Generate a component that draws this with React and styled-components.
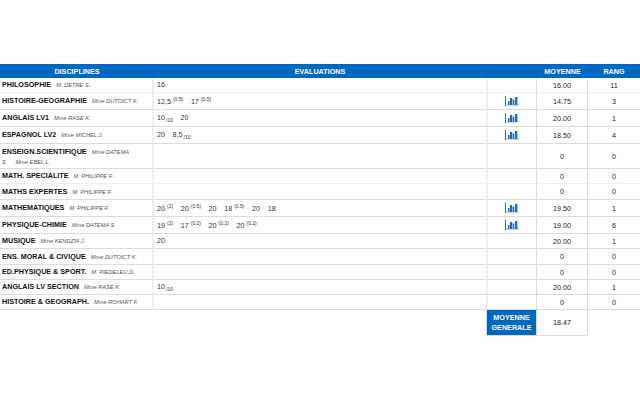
import React from "react";
import styled, { createGlobalStyle } from "styled-components";

const Global = createGlobalStyle`
  html, body { margin: 0; padding: 0; background: #fff; }
  body { font-family: "Liberation Sans", Arial, sans-serif; }
`;
const Page = styled.div`
  width: 640px;
  height: 400px;
  padding-top: 64px;
  box-sizing: border-box;
  overflow: hidden;
`;
const Table = styled.table`
  width: 640px;
  table-layout: fixed;
  border-collapse: separate;
  border-spacing: 0;
  font-size: 7.2px;
  color: #333;
`;
const Head = styled.th`
  background: #0068c0;
  color: #fff;
  font-size: 7.2px;
  font-weight: bold;
  height: 14px;
  padding: 0;
  text-align: center;
`;
const Row = styled.tr`
  height: ${(p) => p.$h}px;
`;
const Cell = styled.td`
  padding: 0;
  box-sizing: border-box;
  border-bottom: 1px solid ${(p) => (p.$soft ? "#eeeeee" : "#dcdcdc")};
  vertical-align: middle;
`;
const NameCell = styled(Cell)`
  padding: ${(p) => (p.$wrap ? "2px 0 0 2px" : "0 0 0 2px")};
  line-height: 10px;
  border-right: 2px solid #eeeeee;
`;
const Subject = styled.b`
  font-size: 7.2px;
  color: #111;
  margin-right: 5px;
`;
const Teacher = styled.i`
  font-size: 5.7px;
  color: #555;
  margin-right: 8px;
`;
const Grades = styled(Cell)`
  padding: 0 0 1px 3px;
  white-space: nowrap;
`;
const Grade = styled.span`
  font-size: 7.2px;
  color: #333;
  margin-right: 7.6px;
`;
const Sup = styled.span`
  font-size: 5px;
  vertical-align: 3px;
  margin-left: 2px;
`;
const Sub = styled.span`
  font-size: 5px;
  vertical-align: -2px;
  margin-left: 1px;
`;
const ChartCell = styled(Cell)`
  border-left: 2px solid #eeeeee;
  border-right: 1px solid #dcdcdc;
  text-align: center;
`;
const Value = styled(Cell)`
  border-right: ${(p) => (p.$end ? "0" : "1px solid #dcdcdc")};
  text-align: center;
  font-size: 7.2px;
  color: #222;
`;
const BlankCell = styled.td`
  padding: 0;
`;
const Total = styled.td`
  padding: 0;
  background: #0068c0;
  color: #fff;
  font-size: 7.2px;
  font-weight: bold;
  line-height: 10px;
  text-align: center;
  border-left: 1px solid #dcdcdc;
  border-right: 1px solid #dcdcdc;
  border-bottom: 1px solid #dcdcdc;
  box-sizing: border-box;
`;
const TotalValue = styled(Value)`
  border-right: 1px solid #dcdcdc;
`;
const Icon = styled.svg`
  display: block;
  margin: 0 auto;
`;

const ChartIcon = () => (
  <Icon width="14" height="10" viewBox="0 0 14 10">
    <rect x="0" y="8" width="14" height="2" fill="#c8dcf4" />
    <rect x="0" y="0" width="1" height="10" fill="#1a78d0" />
    <rect x="3" y="5" width="1.5" height="4" fill="#2f6aa8" />
    <rect x="5" y="2" width="2.2" height="7" fill="#1f66c0" />
    <rect x="7.7" y="3.5" width="1.6" height="5.5" fill="#2a68b0" />
    <rect x="10" y="1" width="2.4" height="8" fill="#1a72d0" />
  </Icon>
);

const rows = [
  { h: 15, s: "PHILOSOPHIE", t: ["M. DETRE S."], g: [["16"]], m: "16.00", r: "11", soft: true },
  { h: 17, s: "HISTOIRE-GEOGRAPHIE", t: ["Mme DUTOICT K."], g: [["12,5", "(0.5)"], ["17", "(0.5)"]], c: 1, m: "14.75", r: "3" },
  { h: 17, s: "ANGLAIS LV1", t: ["Mme RASE K."], g: [["10", null, "/10"], ["20"]], c: 1, m: "20.00", r: "1" },
  { h: 17, s: "ESPAGNOL LV2", t: ["Mme MICHEL J."], g: [["20"], ["8,5", null, "/10"]], c: 1, m: "18.50", r: "4" },
  { h: 25, s: "ENSEIGN.SCIENTIFIQUE", t: ["Mme DATEMA S.", "Mme EBEL L."], g: [], m: "0", r: "0", wrap: true },
  { h: 15, s: "MATH. SPECIALITE", t: ["M. PHILIPPE F."], g: [], m: "0", r: "0", soft: true },
  { h: 16, s: "MATHS EXPERTES", t: ["M. PHILIPPE F."], g: [], m: "0", r: "0" },
  { h: 17, s: "MATHEMATIQUES", t: ["M. PHILIPPE F."], g: [["20", "(2)"], ["20", "(0.5)"], ["20"], ["18", "(0.5)"], ["20"], ["18"]], c: 1, m: "19.50", r: "1" },
  { h: 17, s: "PHYSIQUE-CHIMIE", t: ["Mme DATEMA S."], g: [["19", "(2)"], ["17", "(0.2)"], ["20", "(0.2)"], ["20", "(0.2)"]], c: 1, m: "19.00", r: "6" },
  { h: 15, s: "MUSIQUE", t: ["Mme KENDZIA J."], g: [["20"]], m: "20.00", r: "1" },
  { h: 16, s: "ENS. MORAL & CIVIQUE", t: ["Mme DUTOICT K."], g: [], m: "0", r: "0" },
  { h: 15, s: "ED.PHYSIQUE & SPORT.", t: ["M. PIEDELEU D."], g: [], m: "0", r: "0" },
  { h: 15, s: "ANGLAIS LV SECTION", t: ["Mme RASE K."], g: [["10", null, "/10"]], m: "20.00", r: "1" },
  { h: 15, s: "HISTOIRE & GEOGRAPH.", t: ["Mme ROHART F."], g: [], m: "0", r: "0" },
];

export default function App() {
  return (
    <Page>
      <Global />
      <Table>
        <colgroup>
          <col width="154" />
          <col width="332" />
          <col width="51" />
          <col width="51" />
          <col width="52" />
        </colgroup>
        <thead>
          <tr>
            <Head>DISCIPLINES</Head>
            <Head>EVALUATIONS</Head>
            <Head />
            <Head>MOYENNE</Head>
            <Head>RANG</Head>
          </tr>
        </thead>
        <tbody>
          {rows.map((r) => (
            <Row key={r.s} $h={r.h}>
              <NameCell $soft={r.soft} $wrap={r.wrap}>
                <Subject>{r.s}</Subject>
                {r.t.map((t) => (
                  <Teacher key={t}>{t}</Teacher>
                ))}
              </NameCell>
              <Grades $soft={r.soft}>
                {r.g.map((g, i) => (
                  <Grade key={i}>
                    {g[0]}
                    {g[1] && <Sup>{g[1]}</Sup>}
                    {g[2] && <Sub>{g[2]}</Sub>}
                  </Grade>
                ))}
              </Grades>
              <ChartCell $soft={r.soft}>{r.c ? <ChartIcon /> : null}</ChartCell>
              <Value $soft={r.soft}>{r.m}</Value>
              <Value $soft={r.soft} $end>{r.r}</Value>
            </Row>
          ))}
          <Row $h={26}>
            <BlankCell colSpan={2} />
            <Total>
              MOYENNE
              <br />
              GENERALE
            </Total>
            <TotalValue>18.47</TotalValue>
            <BlankCell />
          </Row>
        </tbody>
      </Table>
    </Page>
  );
}
